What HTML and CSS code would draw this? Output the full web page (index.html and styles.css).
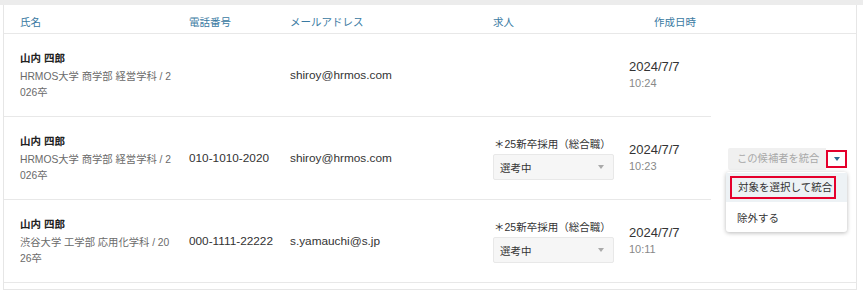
FILE: index.html
```html
<!DOCTYPE html>
<html lang="ja">
<head>
<meta charset="utf-8">
<title>候補者一覧</title>
<link rel="stylesheet" href="styles.css">
</head>
<body>
<div class="topbar"></div>
<div class="table">
  <div class="row head">
    <div class="c c-name">氏名</div>
    <div class="c c-tel">電話番号</div>
    <div class="c c-mail">メールアドレス</div>
    <div class="c c-job">求人</div>
    <div class="c c-date">作成日時</div>
    <div class="c c-act"></div>
  </div>

  <div class="row body">
    <div class="c c-name">
      <div class="name">山内 四郎</div>
      <div class="sub">HRMOS大学 商学部 経営学科 / 2026卒</div>
    </div>
    <div class="c c-tel"></div>
    <div class="c c-mail"><span class="mail">shiroy@hrmos.com</span></div>
    <div class="c c-job"></div>
    <div class="c c-date">
      <div class="date">2024/7/7</div>
      <div class="time">10:24</div>
    </div>
    <div class="c c-act"></div>
  </div>

  <div class="row body">
    <div class="c c-name">
      <div class="name">山内 四郎</div>
      <div class="sub">HRMOS大学 商学部 経営学科 / 2026卒</div>
    </div>
    <div class="c c-tel"><span class="tel">010-1010-2020</span></div>
    <div class="c c-mail"><span class="mail">shiroy@hrmos.com</span></div>
    <div class="c c-job">
      <div class="job">＊25新卒採用（総合職）</div>
      <div class="select"><span>選考中</span><span class="caret"></span></div>
    </div>
    <div class="c c-date">
      <div class="date">2024/7/7</div>
      <div class="time">10:23</div>
    </div>
    <div class="c c-act">
      <div class="split">
        <div class="merge-btn">この候補者を統合</div>
        <div class="toggle"><span class="tri"></span></div>
        <div class="menu">
          <div class="item active"><span class="mark">対象を選択して統合</span></div>
          <div class="item">除外する</div>
        </div>
      </div>
    </div>
  </div>

  <div class="row body">
    <div class="c c-name">
      <div class="name">山内 四郎</div>
      <div class="sub">渋谷大学 工学部 応用化学科 / 2026卒</div>
    </div>
    <div class="c c-tel"><span class="tel">000-1111-22222</span></div>
    <div class="c c-mail"><span class="mail">s.yamauchi@s.jp</span></div>
    <div class="c c-job">
      <div class="job">＊25新卒採用（総合職）</div>
      <div class="select"><span>選考中</span><span class="caret"></span></div>
    </div>
    <div class="c c-date">
      <div class="date">2024/7/7</div>
      <div class="time">10:11</div>
    </div>
    <div class="c c-act"></div>
  </div>
</div>
</body>
</html>
```

FILE: styles.css
```css
* { box-sizing: border-box; }

html, body {
  margin: 0;
  padding: 0;
  background: #fff;
}

body {
  font-family: "Liberation Sans", "Noto Sans CJK JP", sans-serif;
  color: #333;
}

.topbar {
  height: 5px;
  background: #ececec;
}

.table {
  margin-left: 3px;
  width: 854px;
  border-left: 1px solid #e6e6e6;
  border-right: 1px solid #e6e6e6;
  border-bottom: 1px solid #e6e6e6;
  padding-bottom: 6px;
}

.row {
  display: grid;
  grid-template-columns: 185px 101px 203px 136px 82px 145px;
}

.row.head {
  height: 29px;
  border-bottom: 1px solid #e8e8e8;
  font-size: 10.5px;
  color: #3a7aa2;
}

.row.head .c {
  display: flex;
  align-items: center;
  padding-top: 4px;
}

.row.head .c-date { padding-left: 25px; }

.row.body .c {
  min-height: 83px;
  border-bottom: 1px solid #e8e8e8;
  display: flex;
  flex-direction: column;
  justify-content: center;
}

.row.body .c-act { border-bottom: none; }
.row.body:last-child .c-act { border-bottom: 1px solid #e8e8e8; }

.c-name { padding-left: 16px; }

.name {
  font-size: 10.5px;
  font-weight: bold;
  line-height: 16px;
  color: #222;
  margin-bottom: 3px;
}

.sub {
  width: 152.5px;
  font-size: 10.3px;
  line-height: 16px;
  color: #6a6a6a;
  word-break: break-all;
}

.tel, .mail {
  font-size: 11.8px;
  line-height: 16px;
  color: #333;
}

.job {
  font-size: 10.5px;
  line-height: 16px;
  padding-left: 1px;
  margin-bottom: 2px;
  color: #333;
}

.select {
  width: 121px;
  height: 26px;
  background: #f6f6f6;
  border: 1px solid #e8e8e8;
  border-radius: 2px;
  display: flex;
  align-items: center;
  justify-content: space-between;
  padding: 0 9px 0 6px;
  font-size: 10.5px;
  color: #333;
}

.caret {
  width: 0;
  height: 0;
  border-left: 3.5px solid transparent;
  border-right: 3.5px solid transparent;
  border-top: 4px solid #aaa;
}

.date {
  font-size: 13px;
  line-height: 17px;
  color: #333;
}

.time {
  font-size: 11px;
  line-height: 17px;
  color: #888;
}

.row.body .c-act {
  padding-left: 17px;
  align-items: flex-start;
}

.split {
  position: relative;
  display: flex;
  align-items: center;
}

.merge-btn {
  width: 98px;
  height: 22px;
  background: #f0f0f0;
  border-radius: 2px 0 0 2px;
  color: #a8a8a8;
  font-size: 10.3px;
  line-height: 22px;
  padding-left: 9px;
  white-space: nowrap;
}

.toggle {
  width: 21px;
  height: 18px;
  border: 2px solid #e5002c;
  display: flex;
  align-items: center;
  justify-content: center;
  background: #fff;
}

.tri {
  width: 0;
  height: 0;
  border-left: 3.5px solid transparent;
  border-right: 3.5px solid transparent;
  border-top: 4px solid #2b6a93;
}

.menu {
  position: absolute;
  top: 24px;
  left: -2px;
  width: 121px;
  background: #fff;
  border-radius: 3px;
  box-shadow: 0 1px 4px rgba(0, 0, 0, 0.28);
  padding: 1px 0;
  z-index: 2;
}

.item {
  height: 29px;
  font-size: 10.5px;
  color: #333;
  display: flex;
  align-items: center;
  padding-left: 11px;
  padding-top: 2px;
}

.item.active {
  background: #edf2f5;
  padding: 0 0 0 4px;
}

.mark {
  display: inline-block;
  border: 2px solid #e5002c;
  line-height: 15px;
  padding: 2px 2px 2px 6px;
  white-space: nowrap;
}
```
